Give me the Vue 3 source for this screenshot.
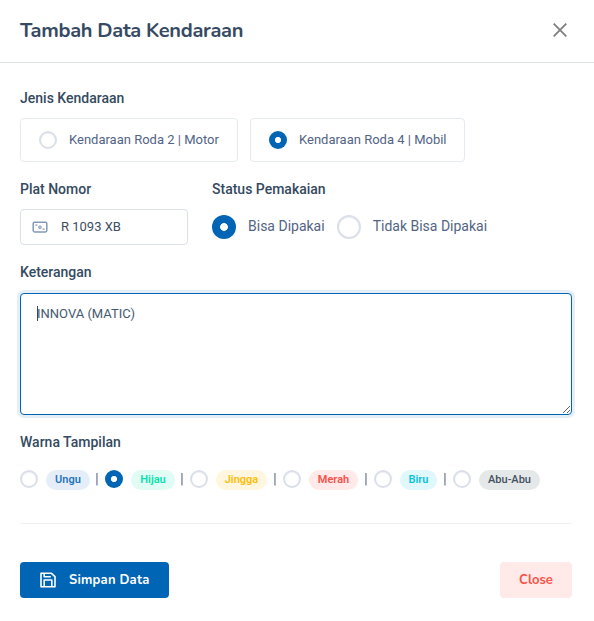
<script setup>
import { ref } from 'vue'

const vehicle = ref('mobil')
const status = ref('bisa')
const color = ref('hijau')
const plate = ref('R 1093 XB')
const note = ref('INNOVA (MATIC)')

const vehicles = [
  { id: 'motor', label: 'Kendaraan Roda 2 | Motor' },
  { id: 'mobil', label: 'Kendaraan Roda 4 | Mobil' },
]
const statuses = [
  { id: 'bisa', label: 'Bisa Dipakai' },
  { id: 'tidak', label: 'Tidak Bisa Dipakai' },
]
const colors = [
  { id: 'ungu', label: 'Ungu' },
  { id: 'hijau', label: 'Hijau' },
  { id: 'jingga', label: 'Jingga' },
  { id: 'merah', label: 'Merah' },
  { id: 'biru', label: 'Biru' },
  { id: 'abu', label: 'Abu-Abu' },
]
</script>

<template>
  <div class="modal">
    <header class="header">
      <h1 class="title">Tambah Data Kendaraan</h1>
      <button class="dismiss" type="button" aria-label="Close">
        <svg width="14" height="14" viewBox="0 0 14 14"><path d="M.7.7l12.6 12.6M13.3.7L.7 13.3" fill="none" stroke="#7f7f7f" stroke-width="1.8" /></svg>
      </button>
    </header>

    <form class="body" @submit.prevent>
      <div class="label">Jenis Kendaraan</div>
      <div class="vehicles">
        <label v-for="v in vehicles" :key="v.id" class="card" :class="v.id">
          <input v-model="vehicle" class="radio" type="radio" name="vehicle" :value="v.id" />
          <span>{{ v.label }}</span>
        </label>
      </div>

      <div class="pair">
        <div class="plate-col">
          <div class="label">Plat Nomor</div>
          <div class="field">
            <svg class="plate-icon" width="16" height="12" viewBox="0 0 16 12" fill="none" stroke="#8299ba">
              <rect x="1.2" y="1.2" width="13.6" height="9.8" rx="1.4" stroke-width="1.5" />
              <circle cx="8" cy="6.2" r="1.2" stroke-width="1.2" />
              <path d="M3.4 4.2h2M10.6 8.2h2" stroke-width="1.2" />
            </svg>
            <input v-model="plate" class="plate" type="text" />
          </div>
        </div>
        <div>
          <div class="label">Status Pemakaian</div>
          <div class="statuses">
            <label v-for="s in statuses" :key="s.id" class="status">
              <input v-model="status" class="radio large" type="radio" name="status" :value="s.id" />
              <span>{{ s.label }}</span>
            </label>
          </div>
        </div>
      </div>

      <div class="label note-label">Keterangan</div>
      <div class="note-wrap">
        <textarea v-model="note" class="note" spellcheck="false"></textarea>
        <span class="caret"></span>
      </div>

      <div class="label color-label">Warna Tampilan</div>
      <div class="colors">
        <template v-for="(c, i) in colors" :key="c.id">
          <span v-if="i" class="sep" :class="{ wide: i > 2 }">|</span>
          <label class="color">
            <input v-model="color" class="radio" type="radio" name="color" :value="c.id" />
            <span class="badge" :class="c.id">{{ c.label }}</span>
          </label>
        </template>
      </div>

      <footer class="footer">
        <button class="btn save" type="submit">
          <svg width="16" height="16" viewBox="0 0 16 16" fill="none" stroke="#fff" stroke-width="1.6" stroke-linejoin="round">
            <path d="M1 1.2h10.2L15 4.6v10.2H1z" />
            <path d="M4.2 14.5V8h7.6v6.5M4.2 1.4v3.4h6.6" />
          </svg>
          <span>Simpan Data</span>
        </button>
        <button class="btn close" type="button"><span>Close</span></button>
      </footer>
    </form>
  </div>
</template>

<style>
body { background: #fff; }
</style>

<style scoped>
* { box-sizing: border-box; }
.modal { height: 621px; overflow: hidden; background: #fff; font-family: Roboto, sans-serif; font-size: 14px; color: #526484; }
.header { display: flex; align-items: center; justify-content: space-between; height: 63px; padding: 0 27px 3px 20px; border-bottom: 1px solid #dbdfea; }
.title { margin: 0; padding-top: 2px; font: 700 20px/24px Nunito, Lato, sans-serif; color: #364a63; letter-spacing: -.3px; white-space: nowrap; }
.dismiss { display: flex; padding: 0; border: 0; background: none; }
.body { padding: 25px 22px 0 20px; }
.label { height: 20px; line-height: 20px; font-weight: 500; color: #344a60; white-space: nowrap; }
.vehicles { display: flex; gap: 12px; margin-top: 10px; }
.card { display: flex; align-items: center; gap: 12px; height: 44px; padding-left: 18px; border: 1px solid #e5e9f2; border-radius: 4px; font-size: 13px; white-space: nowrap; }
.card span { padding-bottom: 2px; }
.card.motor { width: 218px; }
.card.mobil { width: 215px; }
.radio { appearance: none; flex: none; width: 18px; height: 18px; margin: 0; border: 2px solid #dbdfea; border-radius: 50%; background: #fff; box-shadow: inset 0 1px 1px #f0f1f6; }
.radio:checked { border: 0; background: radial-gradient(circle, #fff 0 2.7px, #0065b5 3.5px); box-shadow: none; }
.radio.large { width: 24px; height: 24px; }
.radio.large:checked { background: radial-gradient(circle, #fff 0 3.5px, #0065b5 4.3px); }
.pair { display: flex; gap: 24px; margin-top: 17px; }
.plate-col { width: 168px; }
.field { display: flex; align-items: center; height: 36px; margin-top: 10px; padding-left: 11px; border: 1px solid #dbdfea; border-radius: 4px; }
.plate { width: 110px; margin-left: 13px; padding: 0; border: 0; outline: 0; background: none; font: 13px/20px Roboto, sans-serif; color: #3c4d62; }
.statuses { display: flex; gap: 12px; margin-top: 16px; }
.status { display: flex; align-items: center; gap: 12px; height: 24px; line-height: 22px; white-space: nowrap; }
.status span { padding-bottom: 2px; }
.note-label { margin-top: 17px; }
.note-wrap { position: relative; display: flex; margin-top: 11px; }
.note { width: 552px; height: 122px; padding: 10px 16px; border: 1px solid #0065b5; border-radius: 4px; outline: 0; resize: vertical; font: 13px/20px Roboto, sans-serif; color: #465970; box-shadow: 0 0 0 3px #e5eff8; }
.caret { position: absolute; left: 17px; top: 13px; width: 1px; height: 15px; background: #344a60; }
.color-label { margin-top: 17px; }
.colors { display: flex; height: 20px; margin-top: 18px; }
.color { display: flex; gap: 8px; }
.badge { height: 20px; border-radius: 10px; font-weight: 600; font-size: 11px; line-height: 19px; text-align: center; }
.sep { width: 15px; padding-right: 1px; text-align: center; line-height: 19px; will-change: transform; }
.sep.wide { width: 16px; padding-right: 0; }
.ungu { width: 44px; color: #2475bd; background: #e5eef8; }
.hijau { width: 44px; color: #06e3ac; background: #e1fbf5; }
.jingga { width: 51px; color: #fbbd08; background: #fff6e0; }
.merah { width: 49px; color: #fb5048; background: #ffe9e9; }
.biru { width: 37px; color: #09c2de; background: #e0f8fc; }
.abu { width: 61px; color: #44515f; background: #e4e8e9; font-weight: 500; }
.footer { display: flex; justify-content: space-between; margin-top: 33px; padding-top: 38px; border-top: 1px solid #eef0f1; }
.btn { display: flex; align-items: center; height: 36px; padding: 0; border: 0; border-radius: 4px; font: 700 13px/20px Nunito, Lato, sans-serif; white-space: nowrap; }
.btn span { padding-bottom: 1px; }
.save { width: 149px; padding-left: 20px; gap: 13px; color: #fff; background: #0065b5; letter-spacing: .22px; }
.close { justify-content: center; width: 72px; color: #f75549; background: #ffe9e9; }
</style>
